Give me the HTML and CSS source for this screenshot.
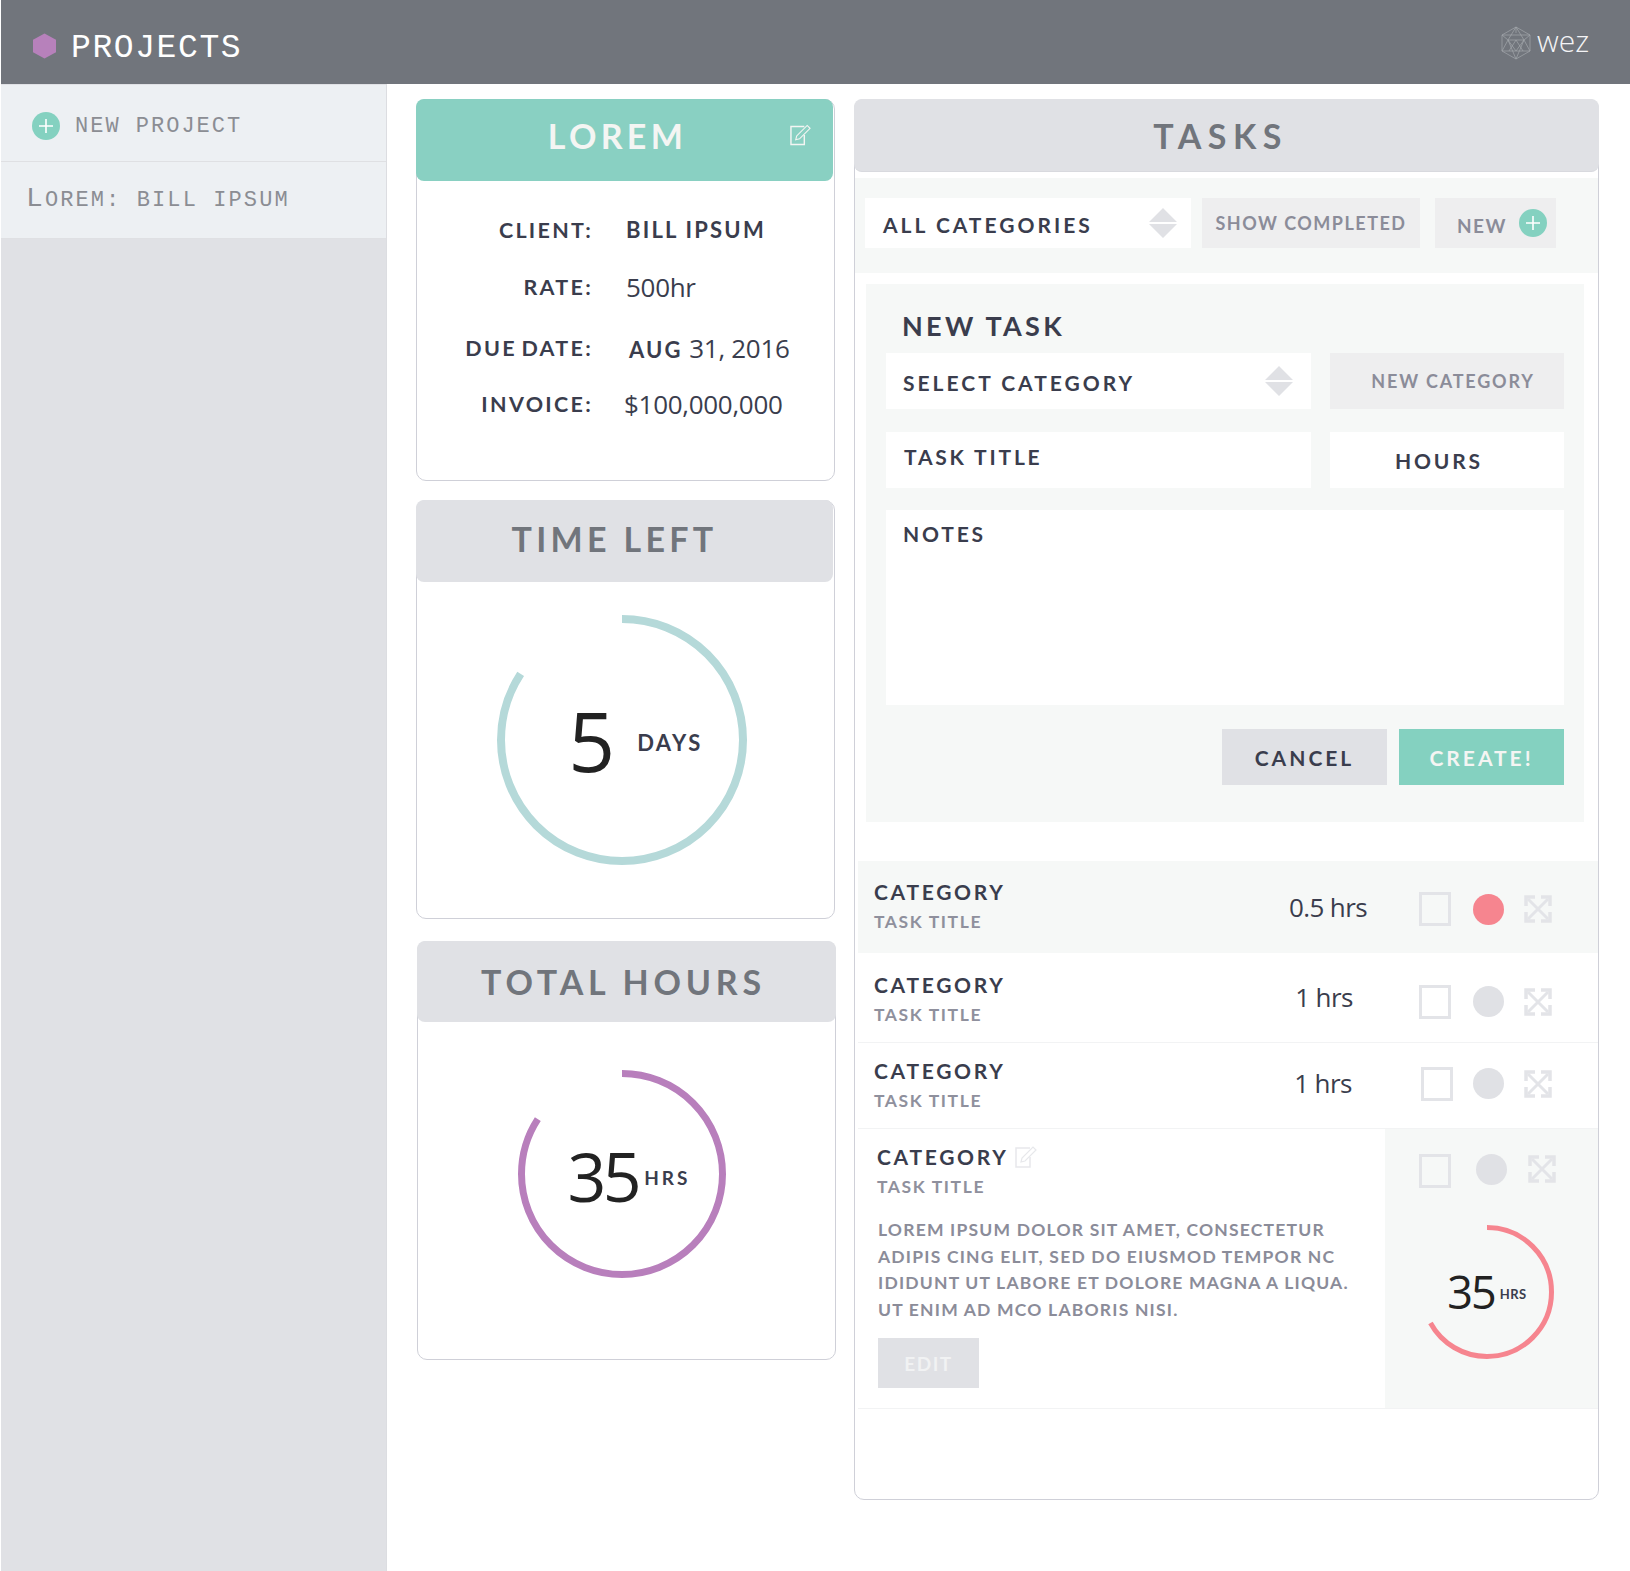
FILE: index.html
```html
<!DOCTYPE html>
<html lang="en">
<head>
<meta charset="utf-8">
<title>Projects</title>
<link rel="stylesheet" href="styles.css">
</head>
<body>
<svg class="defs" width="0" height="0" aria-hidden="true">
  <symbol id="expand" viewBox="0 0 28 28">
    <path d="M4 4 24 24M24 4 4 24" fill="none" stroke="currentColor" stroke-width="3"/>
    <path d="M2 11V2h9M17 2h9v9M26 17v9h-9M11 26H2v-9" fill="none" stroke="currentColor" stroke-width="3.500"/>
  </symbol>
  <symbol id="edit" viewBox="0 0 22 22">
    <path d="M15 2H1v19h14V11" fill="none" stroke="currentColor" stroke-width="1.500"/>
    <path d="M6 16l1-4L18 1l3 3L10 15z" fill="none" stroke="currentColor" stroke-width="1.200"/>
  </symbol>
  <symbol id="updown" viewBox="0 0 28 30">
    <path d="M14 0 28 14H0zM14 30 0 16h28z" fill="currentColor"/>
  </symbol>
  <symbol id="plus" viewBox="0 0 28 28">
    <circle cx="14" cy="14" r="14" fill="#84d1c0"/>
    <path d="M14 7v14M7 14h14" stroke="#fff" stroke-width="1.600"/>
  </symbol>
</svg>

<header class="topbar">
  <div class="brand">
    <svg class="hex" viewBox="0 0 24 26"><path d="M12 0 24 6.500v13L12 26 0 19.500v-13z" fill="#b781bb"/></svg>
    <span class="brand-title">PROJECTS</span>
  </div>
  <div class="logo">
    <svg class="logo-mark" viewBox="0 0 30 34" fill="none" stroke="#a4a7ac" stroke-width=".7">
      <path d="M15 1 29 9v16l-14 8-14-8V9z"/>
      <path d="M15 1 7 14h16zM1 9l6 5-6 11M29 9l-6 5 6 11M1 9h28M1 25h28M7 14l8 19 8-19M15 1v6M15 25 7 14M15 25l8-11M8 25l7-11 7 11"/>
    </svg>
    <span class="logo-text">wez</span>
  </div>
</header>

<div class="layout">
  <aside class="sidebar">
    <div class="side-item side-new">
      <svg class="plus-icon"><use href="#plus"/></svg>
      <span>NEW PROJECT</span>
    </div>
    <div class="side-item side-project">Lorem: BILL IPSUM</div>
  </aside>

  <main class="content">
    <section class="column">
      <article class="card card-lorem">
        <div class="card-head head-teal">
          <h2>LOREM</h2>
          <svg class="head-edit"><use href="#edit"/></svg>
        </div>
        <dl class="facts">
          <dt>CLIENT:</dt><dd class="caps">BILL IPSUM</dd>
          <dt>RATE:</dt><dd>500hr</dd>
          <dt>DUE DATE:</dt><dd class="shift"><span class="caps">AUG</span> 31, 2016</dd>
          <dt>INVOICE:</dt><dd class="back">$100,000,000</dd>
        </dl>
      </article>

      <article class="card card-time">
        <div class="card-head head-grey"><h2 class="title-time">TIME LEFT</h2></div>
        <div class="ring ring-time">
          <svg viewBox="0 0 250 250"><circle class="arc arc-time" cx="125" cy="125" r="121" pathLength="100"/></svg>
          <div class="ring-label label-time"><span class="num num-l">5</span><span class="unit unit-l">DAYS</span></div>
        </div>
      </article>

      <article class="card card-hours">
        <div class="card-head head-grey head-hours"><h2>TOTAL HOURS</h2></div>
        <div class="ring ring-hours">
          <svg viewBox="0 0 208 208"><circle class="arc arc-hours" cx="104" cy="104" r="100.500" pathLength="100"/></svg>
          <div class="ring-label label-hours"><span class="num num-m">35</span><span class="unit unit-m">HRS</span></div>
        </div>
      </article>
    </section>

    <section class="card tasks">
      <div class="card-head head-grey head-tasks"><h2>TASKS</h2></div>

      <div class="filters">
        <div class="select select-all"><span>ALL CATEGORIES</span><svg class="updown"><use href="#updown"/></svg></div>
        <div class="btn-soft btn-show">SHOW COMPLETED</div>
        <div class="btn-soft btn-new"><span>NEW</span><svg class="plus-icon"><use href="#plus"/></svg></div>
      </div>

      <form class="new-task">
        <h3>NEW TASK</h3>
        <div class="form-grid">
          <div class="select select-cat"><span>SELECT CATEGORY</span><svg class="updown"><use href="#updown"/></svg></div>
          <div class="btn-soft btn-cat">NEW CATEGORY</div>
          <div class="field">TASK TITLE</div>
          <div class="field field-hours">HOURS</div>
          <div class="field field-notes">NOTES</div>
        </div>
        <div class="actions">
          <div class="action action-cancel">CANCEL</div>
          <div class="action action-create">CREATE!</div>
        </div>
      </form>

      <div class="rows">
        <div class="row row-active">
          <div class="row-text"><div class="row-cat">CATEGORY</div><div class="row-title">TASK TITLE</div></div>
          <div class="row-hours">0.5 hrs</div>
          <div class="row-tools"><span class="check"></span><span class="dot dot-on"></span><svg class="expand"><use href="#expand"/></svg></div>
        </div>
        <div class="row row-b">
          <div class="row-text"><div class="row-cat">CATEGORY</div><div class="row-title">TASK TITLE</div></div>
          <div class="row-hours">1 hrs</div>
          <div class="row-tools"><span class="check"></span><span class="dot"></span><svg class="expand"><use href="#expand"/></svg></div>
        </div>
        <div class="row row-c">
          <div class="row-text"><div class="row-cat">CATEGORY</div><div class="row-title">TASK TITLE</div></div>
          <div class="row-hours">1 hrs</div>
          <div class="row-tools"><span class="check"></span><span class="dot"></span><svg class="expand"><use href="#expand"/></svg></div>
        </div>
        <div class="row-open">
          <div class="open-main">
            <div class="row-cat">CATEGORY <svg class="cat-edit"><use href="#edit"/></svg></div>
            <div class="row-title">TASK TITLE</div>
            <p class="desc">LOREM IPSUM DOLOR SIT AMET, CONSECTETUR<br>ADIPIS CING ELIT, SED DO EIUSMOD TEMPOR NC<br>IDIDUNT UT LABORE ET DOLORE MAGNA A LIQUA.<br>UT ENIM AD MCO LABORIS NISI.</p>
            <div class="edit-btn">EDIT</div>
          </div>
          <div class="open-side">
            <div class="row-tools"><span class="check"></span><span class="dot"></span><svg class="expand"><use href="#expand"/></svg></div>
            <div class="ring ring-small">
              <svg viewBox="0 0 134 134"><circle class="arc arc-small" cx="67" cy="67" r="64.500" pathLength="100"/></svg>
              <div class="ring-label"><span class="num num-s">35</span><span class="unit unit-s">HRS</span></div>
            </div>
          </div>
        </div>
      </div>
    </section>
  </main>
</div>
</body>
</html>
```

FILE: styles.css
```css
* { box-sizing: border-box; }
html, body { margin: 0; height: 100%; background: #fff; }
body {
  width: 1630px;
  height: 1571px;
  overflow: hidden;
  padding-left: 1px;
  font-family: "Lato", sans-serif;
  color: #3a3d4d;
  display: flex;
  flex-direction: column;
}
.defs { position: absolute; }
h2, h3, p, dl, dd { margin: 0; }

.topbar {
  height: 84px;
  background: #71757c;
  display: flex;
  align-items: center;
  justify-content: space-between;
  padding: 0 41px 0 32px;
  flex: none;
}
.brand { display: flex; align-items: center; gap: 15px; margin-top: 13px; }
.hex { width: 23px; height: 26px; margin-top: -6px; }
.brand-title {
  font-family: "Liberation Mono", monospace;
  font-size: 33px;
  letter-spacing: 1.600px;
  color: #fff;
  line-height: 34px;
}
.logo { display: flex; align-items: center; gap: 6px; margin-top: 1px; }
.logo-mark { width: 30px; height: 34px; }
.logo-text {
  font-family: "Open Sans", sans-serif;
  font-weight: 300;
  font-size: 30px;
  color: #f4f4f6;
  line-height: 34px;
  margin-top: -4px;
}

.layout { display: flex; flex: 1; min-height: 0; }
.sidebar {
  width: 386px;
  background: #e0e1e5;
  border-right: 1px solid #dcdde1;
  flex: none;
}
.side-item {
  height: 77px;
  background: #edf0f3;
  border-bottom: 1px solid #dfe0e3;
  font-family: "Liberation Mono", monospace;
  color: #8b8d93;
  display: flex;
  align-items: center;
}
.side-new { margin-top: 1px; padding: 6px 0 0 31px; gap: 15px; font-size: 22px; letter-spacing: 2px; height: 77px; }
.plus-icon { width: 28px; height: 28px; flex: none; }
.side-project {
  display: block;
  padding: 22px 0 0 25px;
  text-transform: uppercase;
  font-size: 22px;
  letter-spacing: 2.100px;
  line-height: 30px;
}
.side-project::first-letter { font-size: 28px; }

.content { display: flex; flex: 1; align-items: flex-start; padding: 15px 0 0 29px; gap: 18px; }
.column { width: 420px; flex: none; }
.card { border: 1px solid #cfd0d8; border-radius: 10px; background: #fff; width: 419px; }
.card-head {
  height: 82px;
  margin: -1px;
  border-radius: 8px;
  display: flex;
  align-items: center;
  justify-content: center;
  position: relative;
}
.card-head h2 {
  font-size: 34px;
  font-weight: 700;
  letter-spacing: 4.300px;
  line-height: 40px;
}
.head-teal { background: #89d0c2; color: #f4f5f3; padding: 0 14px 8px 0; width: 417px; }
.head-grey { background: #e0e1e5; color: #71757c; width: 417px; }
.head-hours { width: auto; height: 81px; }
.head-hours h2 { letter-spacing: 4.800px; margin-right: 6px; }
.title-time { margin: 0 20px 4px 0; }
.head-edit { position: absolute; right: 22px; top: 25px; width: 21px; height: 22px; color: #f4f5f3; }

.card-lorem { height: 382px; }
.facts {
  display: grid;
  grid-template-columns: 176px auto;
  grid-template-rows: 55px 59px 63px 49px;
  column-gap: 33px;
  padding-top: 22px;
  align-items: center;
  font-size: 21.500px;
  letter-spacing: 2.300px;
  word-spacing: -3px;
  font-weight: 700;
}
.facts dt { text-align: right; }
.facts dd {
  font-family: "Open Sans", sans-serif;
  font-size: 26px;
  font-weight: 400;
  letter-spacing: -.3px;
  word-spacing: 0;
}
.facts .caps, .caps {
  font-family: "Lato", sans-serif;
  font-size: 22px;
  font-weight: 700;
  letter-spacing: 2.200px;
}
.facts .shift { margin-left: 3px; }
.facts .back { margin-left: -2px; }

.card-time { height: 419px; margin-top: 19px; }
.card-hours { height: 419px; margin: 22px 0 0 1px; }

.ring { position: relative; }
.ring svg { display: block; width: 100%; height: 100%; transform: rotate(-90deg); }
.ring-time { width: 250px; height: 250px; margin: 34px 0 0 80px; }
.ring-hours { width: 208px; height: 208px; margin: 49px 0 0 100px; }
.ring-small { width: 134px; height: 134px; margin: 37px 0 0 35px; }
.arc { fill: none; stroke-dashoffset: 0; }
.arc-time { stroke: #b5d9d9; stroke-width: 8; stroke-dasharray: 84.200 100; }
.arc-hours { stroke: #b87fbc; stroke-width: 7; stroke-dasharray: 84.200 100; }
.arc-small { stroke: #f6858f; stroke-width: 5; stroke-dasharray: 67 100; }
.ring-label {
  position: absolute;
  inset: 0;
  display: flex;
  align-items: center;
  justify-content: center;
  color: #222;
}
.label-time { padding-left: 27px; }
.label-hours { padding-left: 14px; }
.num { font-family: "Open Sans", sans-serif; letter-spacing: -2px; }
.num-l { font-size: 82px; line-height: 90px; margin-right: 24px; }
.unit { font-weight: 700; color: #3a3d4d; letter-spacing: 1.500px; }
.unit-l { font-size: 22px; letter-spacing: 2.500px; margin-top: 4px; }
.num-m { font-size: 68px; line-height: 80px; margin-right: 6px; margin-top: 4px; letter-spacing: -3.500px; }
.unit-m { font-size: 19px; margin-top: 6px; letter-spacing: 3px; }
.num-s { font-size: 45px; line-height: 50px; margin-right: 5px; letter-spacing: -2px; }
.unit-s { font-size: 13px; letter-spacing: .5px; margin-top: 4px; }

.tasks { width: 745px; height: 1401px; }
.head-tasks { width: auto; height: 73px; border-bottom: 1px solid #d8d9de; padding: 2px 12px 0 0; }
.head-tasks h2 { letter-spacing: 6.500px; }
.filters {
  margin-top: 7px;
  height: 95px;
  background: #f6f8f7;
  padding: 20px 0 0 10px;
  display: flex;
  align-items: flex-start;
}
.select {
  background: #fff;
  display: flex;
  align-items: center;
  justify-content: space-between;
  font-weight: 700;
  font-size: 21px;
  letter-spacing: 3px;
  color: #3a3d4d;
}
.select-all { width: 326px; height: 50px; padding: 2px 14px 0 18px; }
.updown { width: 28px; height: 30px; color: #e0e1e5; margin-top: -2px; }
.btn-soft {
  background: #eeeeef;
  color: #8b8c99;
  font-size: 18px;
  letter-spacing: 1.500px;
  display: flex;
  align-items: center;
  justify-content: center;
  font-weight: 700;
}
.btn-show { width: 218px; height: 50px; margin-left: 11px; }
.btn-new { width: 121px; height: 50px; margin-left: 15px; gap: 12px; padding-left: 13px; }
.btn-new span { margin-top: 4px; font-size: 19px; }

.new-task {
  margin: 11px 14px 0 11px;
  height: 538px;
  background: #f6f8f7;
  padding: 26px 20px 0 20px;
}
.new-task h3 {
  font-size: 27px;
  font-weight: 700;
  letter-spacing: 3.300px;
  line-height: 32px;
  margin: 0 0 11px 16px;
  color: #3a3d4d;
}
.form-grid {
  display: grid;
  grid-template-columns: 425px 234px;
  grid-template-rows: 57px 56px 195px;
  column-gap: 19px;
  row-gap: 22px;
}
.select-cat { height: 56px; padding: 2px 18px 0 17px; }
.btn-cat { height: 56px; padding-left: 12px; letter-spacing: 1.800px; }
.field {
  background: #fff;
  font-weight: 700;
  font-size: 21px;
  letter-spacing: 2.800px;
  padding: 12px 0 0 18px;
  line-height: 26px;
}
.field-hours { text-align: center; padding: 16px 16px 0 0; }
.field-notes { grid-column: 1 / -1; padding: 11px 0 0 17px; }
.actions { display: flex; justify-content: flex-end; gap: 12px; margin-top: 24px; }
.action {
  width: 165px;
  height: 56px;
  display: flex;
  align-items: center;
  justify-content: center;
  font-size: 21px;
  font-weight: 700;
  letter-spacing: 3px;
}
.action-cancel { background: #e0e1e5; color: #3a3d4d; }
.action-create { background: #84d1c0; color: #f4f5f3; }

.rows { margin: 39px 0 0 3px; }
.row {
  display: flex;
  align-items: center;
  border-bottom: 1px solid #f2f3f4;
}
.row-active { height: 92px; background: #f6f8f7; border-bottom: 0; }
.row-b { height: 90px; }
.row-c { height: 86px; }
.row-text { width: 410px; padding-left: 16px; }
.row-active .row-text, .row-c .row-text { margin-top: -2px; }
.row-b .row-text { margin-top: 2px; }
.row-cat {
  font-weight: 700;
  font-size: 21px;
  letter-spacing: 2.700px;
  line-height: 26px;
  color: #3a3d4d;
  display: flex;
  align-items: center;
  gap: 6px;
}
.row-title {
  font-size: 17.500px;
  font-weight: 700;
  letter-spacing: 1.600px;
  color: #8f909d;
  line-height: 22px;
  margin-top: 6px;
}
.row-hours {
  width: 120px;
  text-align: center;
  font-family: "Open Sans", sans-serif;
  font-size: 26px;
  letter-spacing: -.6px;
  color: #3a3d4d;
}
.row-b .row-hours { padding-right: 8px; margin-top: -2px; }
.row-c .row-hours { padding-right: 10px; margin-top: -6px; }
.row-tools { display: flex; align-items: center; margin-left: 31px; }
.row-active .row-tools { margin-top: 4px; }
.row-b .row-tools { margin-top: 8px; }
.row-c .row-tools { margin-top: -4px; }
.row-c .check { margin-left: 2px; }
.row-c .dot { margin-left: 20px; }
.check {
  width: 32px;
  height: 34px;
  border: 3px solid #e3e4e8;
  flex: none;
}
.dot { width: 31px; height: 31px; border-radius: 50%; background: #e0e1e5; margin-left: 22px; flex: none; }
.dot-on { background: #f6858f; }
.expand { width: 28px; height: 28px; margin-left: 20px; color: #e3e4e8; flex: none; }
.cat-edit { width: 22px; height: 22px; color: #e7e8eb; }

.row-open {
  display: flex;
  height: 280px;
  border-bottom: 1px solid #f2f3f4;
}
.open-main { width: 527px; padding: 15px 0 0 19px; }
.desc {
  font-size: 17.500px;
  font-weight: 700;
  letter-spacing: 1.200px;
  line-height: 26.500px;
  color: #8b8c99;
  margin: 19px 0 0 1px;
  white-space: nowrap;
}
.edit-btn {
  width: 101px;
  height: 50px;
  margin: 15px 0 0 1px;
  background: #e0e1e5;
  color: #f1f2f3;
  display: flex;
  align-items: center;
  justify-content: center;
  font-size: 19px;
  font-weight: 700;
  letter-spacing: 1.500px;
}
.open-side { flex: 1; background: #f6f8f7; padding-top: 21px; }
.open-side .row-tools { margin-left: 34px; }
.open-side .check { margin-top: 4px; }
.open-side .dot { margin-left: 25px; }
.open-side .expand { margin-left: 21px; }
```
